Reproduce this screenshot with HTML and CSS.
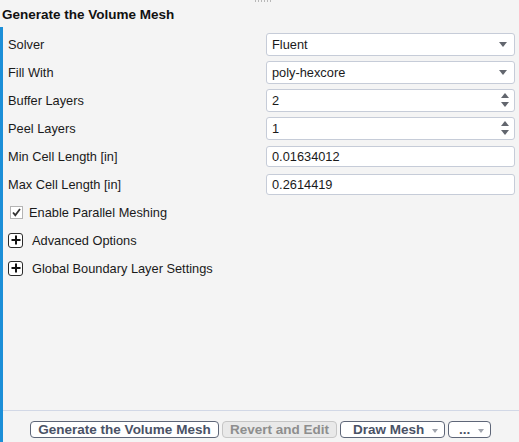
FILE: index.html
```html
<!DOCTYPE html>
<html lang="en">
<head>
  <meta charset="UTF-8" />
  <title>Generate the Volume Mesh</title>
  <link rel="stylesheet" href="styles.css">
</head>
<body>
  <div class="panel">
    <div class="title-bar">
      <span class="grip"></span>
      <h1 class="title">Generate the Volume Mesh</h1>
    </div>

    <div class="content">
      <div class="form">
        <div class="row">
          <label class="label">Solver</label>
          <div class="field select">
            <span>Fluent</span>
            <span class="caret"></span>
          </div>
        </div>
        <div class="row">
          <label class="label">Fill With</label>
          <div class="field select">
            <span>poly-hexcore</span>
            <span class="caret"></span>
          </div>
        </div>
        <div class="row">
          <label class="label">Buffer Layers</label>
          <div class="field spin">
            <span>2</span>
            <span class="spinner"><i class="up"></i><i class="down"></i></span>
          </div>
        </div>
        <div class="row">
          <label class="label">Peel Layers</label>
          <div class="field spin">
            <span>1</span>
            <span class="spinner"><i class="up"></i><i class="down"></i></span>
          </div>
        </div>
        <div class="row">
          <label class="label">Min Cell Length [in]</label>
          <div class="field text">0.01634012</div>
        </div>
        <div class="row">
          <label class="label">Max Cell Length [in]</label>
          <div class="field text">0.2614419</div>
        </div>

        <div class="row check-row">
          <span class="checkbox">
            <svg width="11" height="11" viewBox="0 0 11 11"><path d="M2 5.5 L4.3 8.2 L9 2" fill="none" stroke="#333" stroke-width="1.8"/></svg>
          </span>
          <span>Enable Parallel Meshing</span>
        </div>
        <div class="row expand-row">
          <span class="plus"></span>
          <span>Advanced Options</span>
        </div>
        <div class="row expand-row">
          <span class="plus"></span>
          <span>Global Boundary Layer Settings</span>
        </div>
      </div>

      <div class="footer">
        <button class="btn generate">Generate the Volume Mesh</button>
        <button class="btn disabled revert">Revert and Edit</button>
        <button class="btn drop draw">Draw Mesh <span class="mini-caret"></span></button>
        <button class="btn drop more">... <span class="mini-caret"></span></button>
      </div>
    </div>
  </div>
</body>
</html>
```

FILE: styles.css
```css
body {
  margin: 0;
  background: #f4f4f4;
  font-family: Tahoma, "Liberation Sans", Arial, sans-serif;
  font-size: 12.8px;
  color: #1a1a1a;
}

.panel {
  display: flex;
  flex-direction: column;
  height: 442px;
}

.title-bar {
  position: relative;
  height: 27px;
  display: flex;
  align-items: center;
  padding-left: 2px;
}

.grip {
  position: absolute;
  top: 0;
  left: 255px;
  width: 18px;
  height: 2px;
  background: repeating-linear-gradient(90deg, #b8b8b8 0 1px, transparent 1px 3px);
}

.title {
  margin: 0;
  font-size: 13.5px;
  font-weight: bold;
  color: #111;
  position: relative;
  top: 1px;
}

.content {
  flex: 1;
  display: flex;
  flex-direction: column;
  border-left: 3px solid #1c8fd8;
}

.form {
  flex: 1;
  padding-top: 3px;
}

.row {
  display: flex;
  align-items: center;
  height: 28px;
}

.label {
  width: 258px;
  padding-left: 5px;
}

.field {
  width: 249px;
  box-sizing: border-box;
  background: #fff;
  border: 1px solid #c6ccd8;
  border-radius: 3px;
  display: flex;
  align-items: center;
  justify-content: space-between;
  padding: 0 5px;
}

.select,
.spin {
  height: 23px;
}

.text {
  height: 21px;
}

.caret {
  width: 0;
  height: 0;
  border-left: 4.5px solid transparent;
  border-right: 4.5px solid transparent;
  border-top: 5px solid #62666e;
  margin-right: 2px;
}

.spinner {
  display: flex;
  flex-direction: column;
  gap: 4px;
}

.spinner i {
  width: 0;
  height: 0;
  border-left: 4.5px solid transparent;
  border-right: 4.5px solid transparent;
}

.spinner .up {
  border-bottom: 5px solid #62666e;
}

.spinner .down {
  border-top: 5px solid #62666e;
}

.check-row {
  padding-left: 7px;
  gap: 6px;
}

.checkbox {
  width: 13px;
  height: 13px;
  box-sizing: border-box;
  border: 1px solid #b4b4b4;
  background: #fff;
  display: flex;
  align-items: center;
  justify-content: center;
}

.expand-row {
  padding-left: 5px;
  gap: 9px;
}

.plus {
  position: relative;
  width: 15px;
  height: 15px;
  box-sizing: border-box;
  border: 1px solid #2a2a2a;
  border-radius: 3px;
  background: #fff;
}

.plus::before,
.plus::after {
  content: "";
  position: absolute;
  background: #111;
  left: 50%;
  top: 50%;
  transform: translate(-50%, -50%);
}

.plus::before {
  width: 9px;
  height: 2px;
}

.plus::after {
  width: 2px;
  height: 9px;
}

.footer {
  box-sizing: border-box;
  border-top: 1px solid #d2d8e6;
  height: 32px;
  display: flex;
  align-items: flex-start;
  padding: 10px 0 0 27px;
  gap: 3px;
}

.btn {
  height: 17px;
  padding: 0;
  font-family: inherit;
  font-size: 13.5px;
  font-weight: bold;
  color: #4a5266;
  background: #fff;
  border: 1px solid #5e6678;
  border-radius: 4px;
  display: flex;
  align-items: center;
  justify-content: center;
  line-height: 1;
}

.btn.generate {
  width: 189px;
}

.btn.revert {
  width: 115px;
}

.btn.disabled {
  color: #8e8e8e;
  background: #e9e9e9;
  border-color: #c6c6c6;
}

.btn.draw {
  width: 105px;
  justify-content: flex-start;
  padding-left: 12px;
}

.btn.more {
  width: 43px;
  justify-content: flex-start;
  padding-left: 10px;
}

.drop {
  position: relative;
}

.mini-caret {
  position: absolute;
  right: 6px;
  top: 7px;
  border-left: 3.5px solid transparent;
  border-right: 3.5px solid transparent;
  border-top: 4px solid #a0a4ad;
}
```
